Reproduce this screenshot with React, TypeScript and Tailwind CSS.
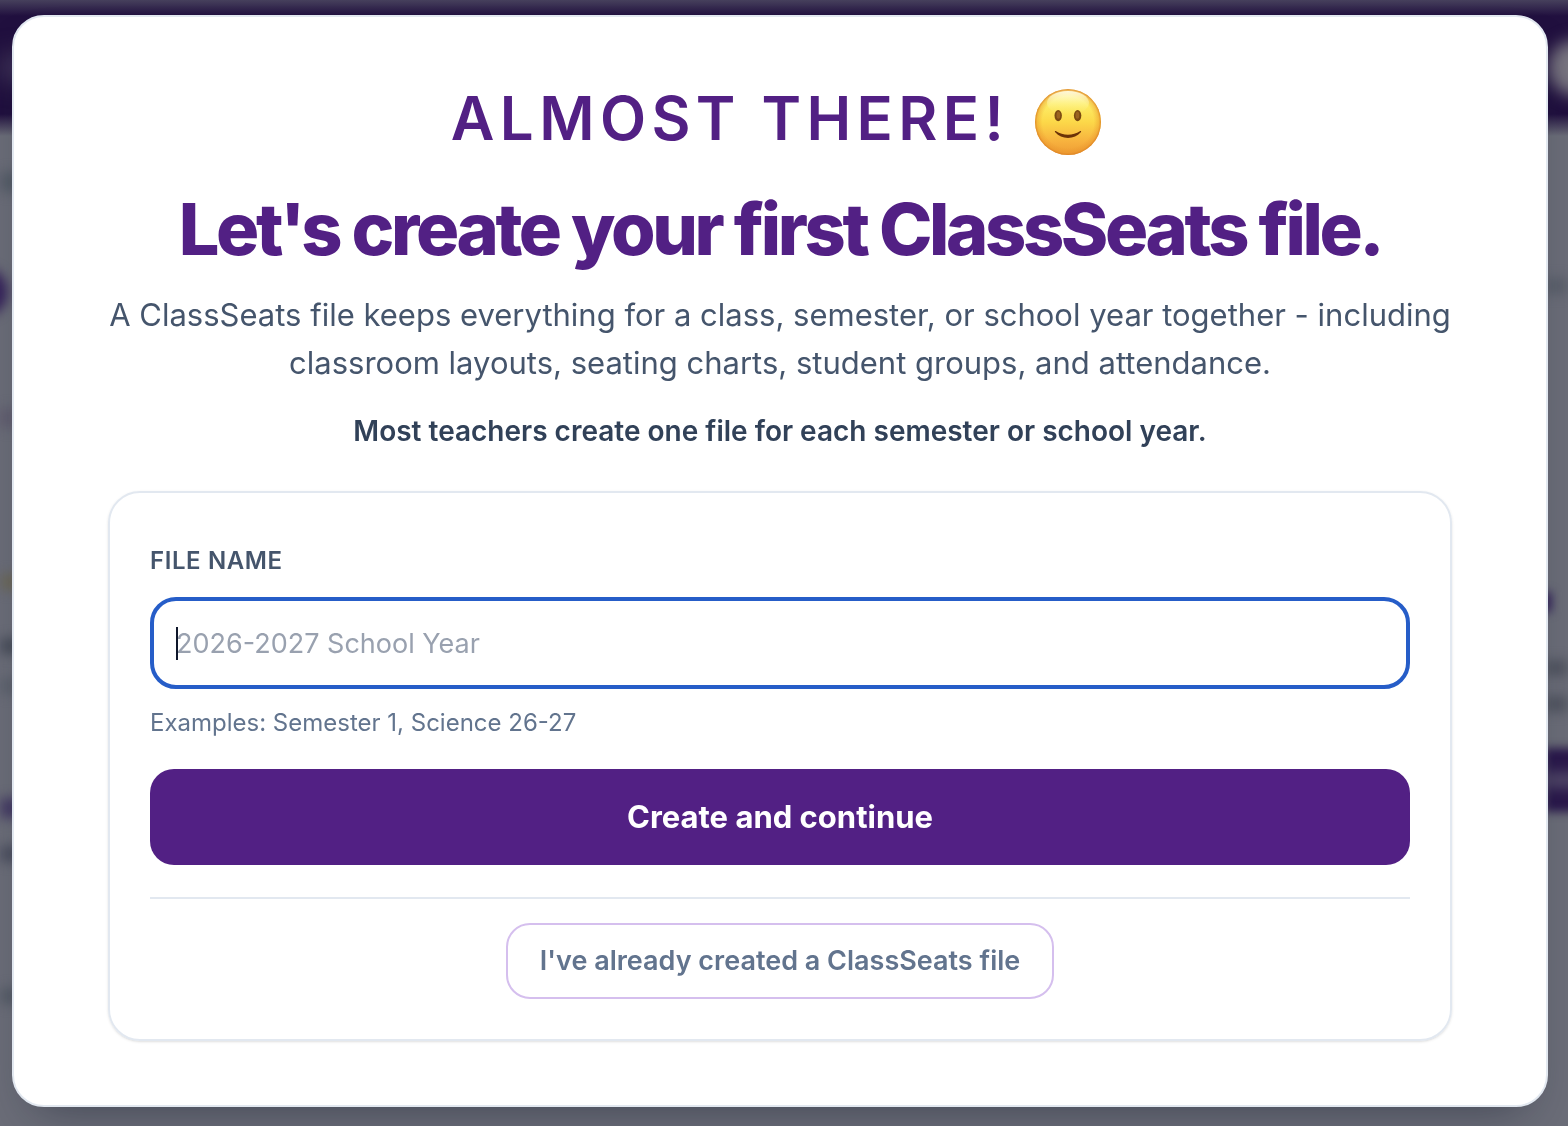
import { useState } from "react";

function SmileEmoji() {
  return (
    <svg viewBox="0 0 66 66" className="size-[66px] shrink-0" role="img" aria-label="Smiling face">
      <defs>
        <linearGradient id="face" x1="0" y1="0" x2="0" y2="1">
          <stop offset="0" stopColor="#fff3a0" />
          <stop offset="0.22" stopColor="#fdee68" />
          <stop offset="0.5" stopColor="#fcd849" />
          <stop offset="0.8" stopColor="#f7b13e" />
          <stop offset="1" stopColor="#ee9c33" />
        </linearGradient>
        <radialGradient id="rim" cx="0.5" cy="0.5" r="0.5">
          <stop offset="0.78" stopColor="#e8912a" stopOpacity="0" />
          <stop offset="0.93" stopColor="#e8912a" stopOpacity="0.4" />
          <stop offset="1" stopColor="#d97e20" stopOpacity="0.9" />
        </radialGradient>
        <linearGradient id="gloss" x1="0" y1="0" x2="0" y2="1">
          <stop offset="0" stopColor="#fffde8" stopOpacity="0.9" />
          <stop offset="1" stopColor="#fff17a" stopOpacity="0" />
        </linearGradient>
      </defs>
      <circle cx="33" cy="33" r="33" fill="url(#face)" />
      <circle cx="33" cy="33" r="33" fill="url(#rim)" />
      <ellipse cx="33" cy="14" rx="21" ry="12" fill="url(#gloss)" />
      <ellipse cx="23.2" cy="26.6" rx="3.7" ry="5.6" fill="#7a4a12" />
      <ellipse cx="42.6" cy="26.6" rx="3.7" ry="5.6" fill="#7a4a12" />
      <ellipse cx="23.4" cy="26.2" rx="1.9" ry="3.6" fill="#9a6420" />
      <ellipse cx="42.4" cy="26.2" rx="1.9" ry="3.6" fill="#9a6420" />
      <path
        d="M20.200 43.200c-.8-.7 0-1.500.9-.9 3.600 2.300 7.500 3.500 11.900 3.500s8.300-1.200 11.900-3.500c.9-.6 1.700.2.9.9-3.300 3.600-7.700 5.700-12.800 5.700s-9.500-2.100-12.800-5.700z"
        fill="#6b3208"
      />
    </svg>
  );
}

/* App page that sits out of focus behind the dialog */
function BlurredPage() {
  return (
    <div aria-hidden="true" className="fixed inset-0 -z-10 overflow-hidden bg-[#6b6d78]">
      <div className="flex h-[136px] items-center justify-between bg-[linear-gradient(#46405c,#21103f_16px,#21103f_114px,#6b6d78)]">
        <div className="h-6 w-16 bg-[#443a5c] blur-md" />
        <div className="-mr-9 size-14 rounded-full bg-[#77747f] blur-[8px]" />
      </div>
      <div className="flex justify-between">
        <div className="w-4">
          <div className="mt-9 h-5 w-6 bg-[#555c67] blur-[6px]" />
          <div className="mt-[76px] -ml-10 size-12 rounded-full bg-[#35225a] blur-[6px]" />
          <div className="mt-[92px] h-5 bg-[#605c6e] blur-[6px]" />
          <div className="mt-[146px] h-4 w-8 bg-[#6b6758] blur-[6px]" />
          <div className="mt-12 h-4 w-8 bg-[#484d59] blur-[6px]" />
          <div className="mt-6 h-4 w-8 bg-[#5c616c] blur-[6px]" />
          <div className="mt-[104px] h-5 w-8 bg-[#443a63] blur-[6px]" />
          <div className="mt-7 h-4 w-8 bg-[#4b4e5e] blur-[6px]" />
          <div className="mt-[126px] h-4 w-8 bg-[#555b66] blur-[6px]" />
        </div>
        <div className="w-6">
          <div className="mt-[142px] h-4 bg-[#5a5f6a] blur-[6px]" />
          <div className="mt-[298px] -ml-4 h-5 w-6 bg-[#35255a] blur-[5px]" />
          <div className="mt-12 h-4 bg-[#50545f] blur-[6px]" />
          <div className="mt-5 h-4 bg-[#50545f] blur-[6px]" />
          <div className="mt-9 flex h-16 w-20 items-center bg-[#2a184b] blur-[5px]">
            <div className="h-4 w-20 bg-[#514868] blur-[5px]" />
          </div>
        </div>
      </div>
    </div>
  );
}

export default function App() {
  const [fileName, setFileName] = useState("");

  return (
    <div className="min-h-screen pt-[15px] pr-5 pb-[19px] pl-3 font-[Inter,'Liberation_Sans',sans-serif]">
      <BlurredPage />

      <main
        role="dialog"
        aria-labelledby="dialog-title"
        className="rounded-[32px] border-2 border-slate-200 bg-white px-[94px] pt-16 pb-16 text-center shadow-[0_24px_48px_-24px_rgba(15,23,42,0.5)]"
      >
        <p className="flex items-end justify-center gap-[26px] pr-2 text-[60px] leading-[74px] font-semibold tracking-[0.09em] text-[#522084]">
          <span>ALMOST THERE!</span>
          <SmileEmoji />
        </p>
        <h1
          id="dialog-title"
          className="mt-8 text-[72px] leading-[84px] font-extrabold tracking-[-0.047em] text-[#522084]"
        >
          Let's create your first ClassSeats file.
        </h1>
        <p className="mt-5 text-[31px] leading-12 text-slate-600">
          A ClassSeats file keeps everything for a class, semester, or school year together - including
          classroom layouts, seating charts, student groups, and attendance.
        </p>
        <p className="mt-6 text-[28px] leading-10 font-semibold text-slate-700">
          Most teachers create one file for each semester or school year.
        </p>

        <form
          onSubmit={(event) => event.preventDefault()}
          className="mt-10 rounded-[32px] border-2 border-slate-200 px-10 pt-12 pb-10 text-left shadow-sm"
        >
          <label
            htmlFor="file-name"
            className="block text-[24px] leading-10 font-semibold tracking-wide text-slate-600"
          >
            FILE NAME
          </label>
          <div className="relative mt-4">
            <input
              id="file-name"
              type="text"
              autoFocus
              value={fileName}
              onChange={(event) => setFileName(event.target.value)}
              placeholder="2026-2027 School Year"
              className="block h-[92px] w-full rounded-[26px] border-4 border-[#265dc8] px-[22px] text-[27px] text-slate-900 caret-transparent outline-none placeholder:text-gray-400 focus:not-placeholder-shown:caret-slate-900"
            />
            {fileName === "" && (
              <span className="pointer-events-none absolute top-[30px] left-[26px] h-[33px] w-0.5 bg-slate-900" />
            )}
          </div>
          <p className="mt-4 text-[24px] leading-9 text-slate-500">Examples: Semester 1, Science 26-27</p>
          <button
            type="submit"
            className="mt-7 block h-24 w-full rounded-3xl bg-[#522084] text-[31px] font-bold text-white"
          >
            Create and continue
          </button>
          <div className="mt-8 flex justify-center border-t-2 border-slate-200 pt-6">
            <button
              type="button"
              className="h-19 rounded-3xl border-2 border-[#d5bfee] px-8 text-[27px] font-semibold text-slate-500"
            >
              I've already created a ClassSeats file
            </button>
          </div>
        </form>
      </main>
    </div>
  );
}
